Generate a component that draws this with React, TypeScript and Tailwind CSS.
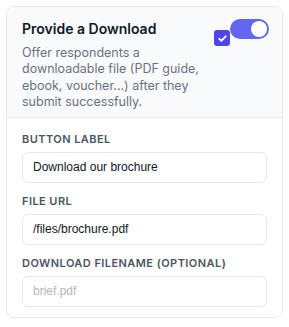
import React, { useState } from 'react';

const fields = [
  { label: 'Button label', value: 'Download our brochure', placeholder: '' },
  { label: 'File URL', value: '/files/brochure.pdf', placeholder: '' },
  { label: 'Download filename (optional)', value: '', placeholder: 'brief.pdf' },
];

const App: React.FC = () => {
  const [enabled, setEnabled] = useState(true);

  return (
    <div className="min-h-screen bg-white p-[6px] font-['Inter',sans-serif]">
      <div className="rounded-lg border border-gray-200 overflow-hidden">
        {/* Header */}
        <div className="flex justify-between bg-[#f9fafb] border-b border-gray-200 pl-[15px] pr-[13px] pt-[12px] pb-[6px]">
          <div className="w-[190px]">
            <h3 className="text-[14px] leading-[20px] font-semibold text-gray-900">Provide a Download</h3>
            <p className="mt-[6px] text-[12.5px] leading-[16.4px] text-gray-500">
              Offer respondents a downloadable file (PDF guide, ebook, voucher...) after they submit successfully.
            </p>
          </div>
          <div className="flex items-start">
            <span className="mt-[11px] flex h-4 w-4 items-center justify-center rounded-[3px] bg-[#4f46e5]">
              <svg width="11" height="11" viewBox="0 0 12 12" fill="none">
                <path d="M2.5 6.3l2.3 2.3 4.7-5" stroke="white" strokeWidth="2" strokeLinecap="round" strokeLinejoin="round" />
              </svg>
            </span>
            <button
              onClick={() => setEnabled(!enabled)}
              className={`flex h-5 w-[39px] items-center rounded-full px-[2px] ${enabled ? 'bg-[#6366f1] justify-end' : 'bg-gray-300 justify-start'}`}
            >
              <span className="h-4 w-4 rounded-full bg-white" />
            </button>
          </div>
        </div>

        {/* Fields */}
        <div className="flex flex-col gap-[10px] px-[15px] pt-[13px] pb-[10px] bg-white">
          {fields.map((f) => (
            <div key={f.label}>
              <div className="mb-[5px] text-[11px] leading-[16px] font-semibold uppercase tracking-[0.04em] text-[#4b5563]">
                {f.label}
              </div>
              <input
                defaultValue={f.value}
                placeholder={f.placeholder}
                className="block h-[31px] w-full rounded-md border border-gray-200 bg-white px-[10px] font-['Liberation_Sans',Arial,sans-serif] text-[12px] text-gray-900 placeholder:text-[#b3b8c0] outline-none"
              />
            </div>
          ))}
        </div>
      </div>
    </div>
  );
};

export default App;
